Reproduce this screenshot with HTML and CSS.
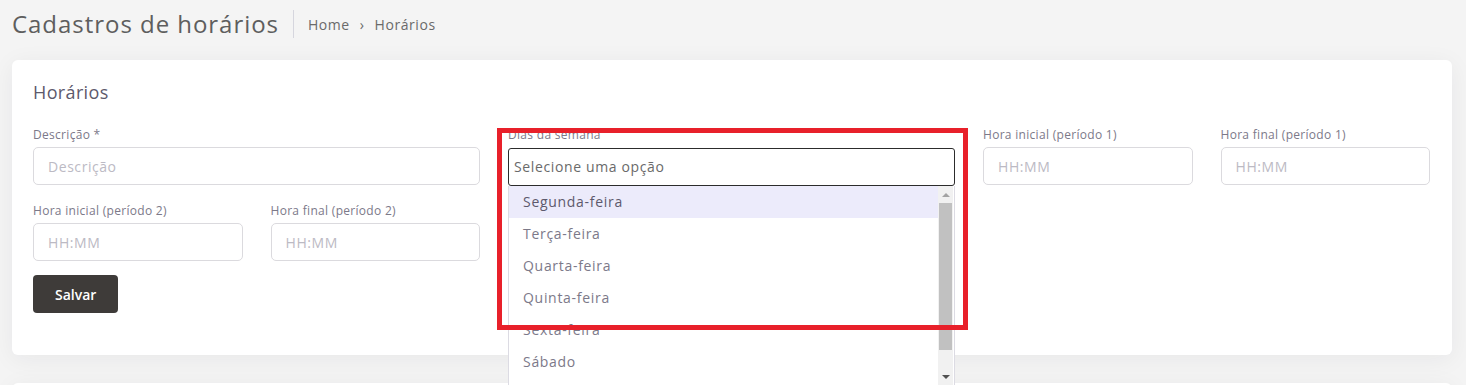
FILE: index.html
```html
<!DOCTYPE html>
<html lang="pt-BR">
<head>
    <meta charset="UTF-8">
    <meta name="viewport" content="width=device-width, initial-scale=1.0">
    <title>Cadastros de horários</title>
    <link rel="stylesheet" href="styles.css">
</head>
<body>

<!-- cabeçalho -->
<header class="page-header">
    <h1 class="page-title">Cadastros de horários</h1>
    <nav class="breadcrumb">
        <span>Home</span>
        <span class="crumb-sep">&rsaquo;</span>
        <span>Horários</span>
    </nav>
</header>

<!-- formulário -->
<section class="card">
    <h2 class="card-title">Horários</h2>

    <div class="row">
        <div class="field col-4">
            <label>Descrição *</label>
            <input class="input" type="text" placeholder="Descrição">
        </div>
        <div class="field col-4 select-field">
            <label>Dias da semana</label>
            <div class="select-box">Selecione uma opção</div>
            <div class="dropdown">
                <ul class="options">
                    <li class="active">Segunda-feira</li>
                    <li>Terça-feira</li>
                    <li>Quarta-feira</li>
                    <li>Quinta-feira</li>
                    <li>Sexta-feira</li>
                    <li>Sábado</li>
                </ul>
                <div class="scrollbar">
                    <span class="arrow up"></span>
                    <span class="thumb"></span>
                    <span class="track"></span>
                    <span class="arrow down"></span>
                </div>
            </div>
        </div>
        <div class="field col-2">
            <label>Hora inicial (período 1)</label>
            <input class="input" type="text" placeholder="HH:MM">
        </div>
        <div class="field col-2">
            <label>Hora final (período 1)</label>
            <input class="input" type="text" placeholder="HH:MM">
        </div>
    </div>

    <div class="row row-last">
        <div class="field col-2">
            <label>Hora inicial (período 2)</label>
            <input class="input" type="text" placeholder="HH:MM">
        </div>
        <div class="field col-2">
            <label>Hora final (período 2)</label>
            <input class="input" type="text" placeholder="HH:MM">
        </div>
    </div>

    <button class="btn-save">Salvar</button>
</section>

<section class="card card-next"></section>

<!-- marcação em vermelho -->
<div class="highlight"></div>

</body>
</html>
```

FILE: styles.css
```css
/* base */
body {
    font-family: 'Open Sans', sans-serif;
    margin: 0;
    padding: 0 14px 0 12px;
    background-color: #f4f4f4;
    color: #6e6b7b;
    position: relative;
    overflow: hidden;
}

/* cabeçalho */
.page-header {
    display: flex;
    align-items: center;
    height: 48px;
}

.page-title {
    margin: 0;
    font-size: 24px;
    font-weight: 400;
    line-height: 28px;
    letter-spacing: 0.04em;
    color: #5e5e5e;
    padding-right: 14px;
    border-right: 1px solid #d6d6de;
}

.breadcrumb {
    display: flex;
    gap: 10px;
    padding-left: 14px;
    font-size: 14px;
    letter-spacing: 0.04em;
    color: #6a6a6a;
}

/* cartão */
.card {
    background-color: #fff;
    border-radius: 6px;
    box-shadow: 0 4px 24px rgba(34, 41, 47, 0.06);
    margin-top: 12px;
    padding: 21px 22px 42px 21px;
}

.card-next {
    margin-top: 28px;
    height: 40px;
    padding: 0;
}

.card-title {
    margin: 0 0 24px;
    font-size: 18px;
    font-weight: 400;
    line-height: 22px;
    letter-spacing: 0.02em;
    color: #5d596c;
}

/* grade do formulário */
.row {
    display: grid;
    grid-template-columns: repeat(12, 1fr);
    column-gap: 28px;
    margin-bottom: 17px;
}

.row-last {
    margin-bottom: 14px;
}

.col-4 { grid-column: span 4; }
.col-2 { grid-column: span 2; }

.field {
    display: flex;
    flex-direction: column;
}

.field label {
    font-size: 12px;
    line-height: 15px;
    letter-spacing: 0.025em;
    color: #7c7989;
    margin-bottom: 5px;
}

.input {
    box-sizing: border-box;
    height: 38px;
    border: 1px solid #dbdade;
    border-radius: 5px;
    padding: 0 14px;
    font-family: inherit;
    font-size: 14px;
    letter-spacing: 0.04em;
    color: #6e6b7b;
    outline: none;
}

.input::placeholder {
    color: #bcbac4;
}

/* select aberto */
.select-field {
    position: relative;
}

.select-box {
    box-sizing: border-box;
    height: 38px;
    margin-top: 1px;
    border: 1px solid #2c2c2c;
    border-radius: 3px;
    padding: 0 5px 2px;
    display: flex;
    align-items: center;
    font-size: 14px;
    letter-spacing: 0.045em;
    color: #6a6a6a;
}

.dropdown {
    position: absolute;
    top: 59px;
    left: 0;
    right: 0;
    height: 199px;
    display: flex;
    background-color: #fff;
    border: 1px solid #dcdbe3;
    border-top: none;
    z-index: 5;
}

.options {
    flex: 1;
    list-style: none;
    margin: 0;
    padding: 0;
    overflow: hidden;
}

.options li {
    height: 32px;
    line-height: 32px;
    padding-left: 14px;
    font-size: 14px;
    letter-spacing: 0.05em;
    color: #7c7989;
}

.options li.active {
    background-color: #ecebfb;
    color: #5d596c;
}

.scrollbar {
    width: 15px;
    background-color: #f1f1f1;
    display: flex;
    flex-direction: column;
    align-items: center;
    margin-right: 1px;
}

.arrow {
    height: 17px;
    width: 15px;
    display: flex;
    align-items: center;
    justify-content: center;
}

.arrow::before {
    content: "";
    border-left: 4px solid transparent;
    border-right: 4px solid transparent;
}

.arrow.up::before {
    border-bottom: 4px solid #a3a3a3;
}

.arrow.down::before {
    border-top: 4px solid #505050;
}

.thumb {
    width: 13px;
    height: 147px;
    background-color: #c1c1c1;
}

.track {
    flex: 1;
}

/* botão */
.btn-save {
    height: 38px;
    padding: 0 22px;
    border: none;
    border-radius: 4px;
    background-color: #3e3b39;
    color: #fff;
    font-family: inherit;
    font-size: 14px;
    font-weight: 600;
    cursor: pointer;
}

/* marcação */
.highlight {
    position: absolute;
    left: 497px;
    top: 128px;
    width: 461px;
    height: 192px;
    border: 5px solid #e8202a;
    pointer-events: none;
    z-index: 10;
}
```
